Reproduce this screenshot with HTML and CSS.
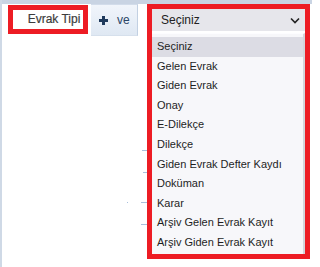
FILE: index.html
```html
<!DOCTYPE html>
<html lang="tr">
<head>
    <meta charset="UTF-8">
    <meta name="viewport" content="width=device-width, initial-scale=1.0">
    <title>Evrak Tipi</title>
    <link rel="stylesheet" href="styles.css">
</head>
<body>
    <div class="page">
        <div class="toolbar">
            <div class="field-label">Evrak Tipi</div>
            <div class="tab">
                <svg class="plus" width="9" height="9" viewBox="0 0 9 9">
                    <rect x="3" y="0" width="3" height="9" fill="#1f3a5c"/>
                    <rect x="0" y="3" width="9" height="3" fill="#1f3a5c"/>
                </svg>
                <span>ve</span>
            </div>
        </div>

        <!-- connector stubs behind the open dropdown -->
        <span class="stub stub-1"></span>
        <span class="stub stub-2"></span>
        <span class="stub stub-3"></span>
        <span class="stub stub-4"></span>
        <span class="dot"></span>

        <div class="select-box">
            <div class="select-head">
                <span>Seçiniz</span>
                <svg width="10" height="7" viewBox="0 0 10 7">
                    <path d="M1 1.5 L5 5.5 L9 1.5" fill="none" stroke="#222" stroke-width="1.6"/>
                </svg>
            </div>
            <ul class="options">
                <li class="active">Seçiniz</li>
                <li>Gelen Evrak</li>
                <li>Giden Evrak</li>
                <li>Onay</li>
                <li>E-Dilekçe</li>
                <li>Dilekçe</li>
                <li>Giden Evrak Defter Kaydı</li>
                <li>Doküman</li>
                <li>Karar</li>
                <li>Arşiv Gelen Evrak Kayıt</li>
                <li>Arşiv Giden Evrak Kayıt</li>
            </ul>
        </div>
    </div>
</body>
</html>
```

FILE: styles.css
```css
* {
    margin: 0;
    padding: 0;
    box-sizing: border-box;
}

body {
    font-family: "Liberation Sans", Arial, sans-serif;
    background: white;
    width: 320px;
    height: 267px;
    overflow: hidden;
}

.page {
    position: relative;
    height: 267px;
    border-left: 2px solid #cfd9e6;
    background: linear-gradient(#c9d4e3, #c9d4e3) no-repeat 0 0 / 310px 4px, white;
}

.toolbar {
    display: flex;
    padding: 5px 0 0 6px;
}

.field-label {
    width: 80px;
    height: 29px;
    border: 5px solid #ed1c24;
    background: white;
    color: #3c3c3c;
    font-size: 12px;
    display: flex;
    align-items: center;
    justify-content: center;
    padding: 0 0 1px 12px;
    -webkit-text-stroke: 0.2px #3c3c3c;
}

.tab {
    margin: -1px 0 0 3px;
    width: 47px;
    height: 32px;
    border-top: 1px solid #d2dcea;
    border-right: 1px solid #c2d0e2;
    border-bottom: 1px solid #d6e0ec;
    background: linear-gradient(#f1f5fb, #dfe8f3);
    display: flex;
    align-items: center;
    padding: 0 0 0 8px;
    gap: 9px;
    color: #2b4566;
    font-size: 12px;
}

.stub {
    position: absolute;
    height: 1px;
    background: #a9c0dc;
}

.stub-1 { left: 140px; top: 150px; width: 6px; }
.stub-2 { left: 141px; top: 172px; width: 5px; }
.stub-3 { left: 139px; top: 202px; width: 7px; }
.stub-4 { left: 139px; top: 224px; width: 7px; }

.dot {
    position: absolute;
    left: 125px;
    top: 202px;
    width: 1px;
    height: 1px;
    background: #a9c0dc;
}

.select-box {
    position: absolute;
    left: 145px;
    top: 4px;
    width: 163px;
    height: 255px;
    border: 5px solid #ed1c24;
    background: white;
    display: flex;
    flex-direction: column;
}

.select-head {
    height: 22px;
    background: #e6e6eb;
    display: flex;
    align-items: center;
    justify-content: space-between;
    padding: 0 5px 0 9px;
    font-size: 12px;
    color: #222;
}

.options {
    list-style: none;
    flex: 1;
    margin-top: 2px;
    background: #f7f7fa;
    border-top: 1px solid #fdfdff;
    border-right: 2px solid #d4d4da;
    padding-top: 3px;
}

.options li {
    height: 19.6px;
    line-height: 19.6px;
    padding-left: 5px;
    font-size: 11px;
    color: #1e1e1e;
    white-space: nowrap;
}

.options li.active {
    background: #dcdce4;
}
```
